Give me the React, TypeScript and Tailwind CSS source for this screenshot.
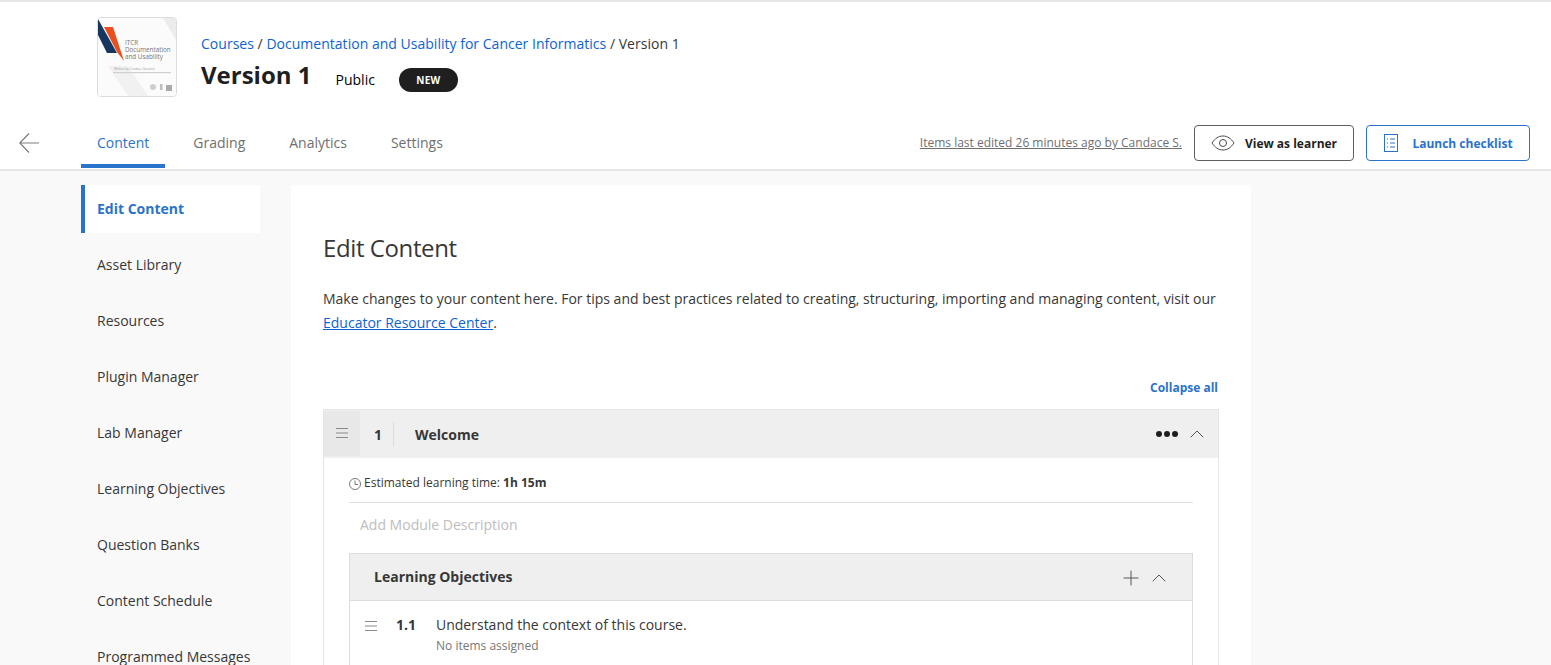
import { ChevronUp, Plus } from "lucide-react"

const font = { fontFamily: '"Open Sans", sans-serif' }

const tabs = ["Content", "Grading", "Analytics", "Settings"]

const sideItems = [
  "Edit Content",
  "Asset Library",
  "Resources",
  "Plugin Manager",
  "Lab Manager",
  "Learning Objectives",
  "Question Banks",
  "Content Schedule",
  "Programmed Messages",
]

function Thumbnail() {
  return (
    <div className="w-20 h-20 rounded border border-[#dcdcdc] overflow-hidden bg-white shrink-0">
      <svg width="78" height="78" viewBox="0 0 78 78">
        <rect width="78" height="78" fill="#fbfbfb" />
        <polygon points="65,0 78,0 78,22" fill="#ececec" />
        <polygon points="10,48 30,48 50,78 30,78" fill="#f1f1f1" />
        <polygon points="0,1 19,35 9,35 0,17" fill="#17375e" />
        <polygon points="6,9 15,9 26,43 19,34" fill="#e8501f" />
        <text x="27" y="27" fontSize="6.300" fill="#777">ITCR</text>
        <text x="27" y="34" fontSize="6.300" fill="#777">Documentation</text>
        <text x="27" y="41" fontSize="6.300" fill="#777">and Usability</text>
        <text x="16" y="52" fontSize="3" fill="#999">Written by: Candace Savonen</text>
        <rect x="15" y="54" width="58" height="1.200" fill="#d0d0d0" />
        <circle cx="55" cy="69" r="3" fill="#cfcfcf" />
        <rect x="62" y="66" width="2.500" height="6" fill="#bdbdbd" />
        <rect x="68" y="67" width="6" height="6" fill="#aaa" />
      </svg>
    </div>
  )
}

function Handle() {
  return (
    <svg width="12" height="10" viewBox="0 0 12 10" stroke="#8a8a8a" strokeWidth="1">
      <path d="M0 .5h12M0 5h12M0 9.500h12" />
    </svg>
  )
}

export default function App() {
  return (
    <div style={font} className="h-[665px] overflow-hidden bg-[#f9f9f9] text-[#1f1f1f] text-sm">
      <header className="bg-white border-t-2 border-b-2 border-[#e6e6e6] h-[171px] flex flex-col">
        <div className="flex pl-[97px] pt-[15px] h-[121px]">
          <Thumbnail />
          <div className="ml-6 pt-[17px]">
            <div className="leading-5 text-[#373737] tracking-[0.02px]">
              <span className="text-[#0b63d6]">Courses</span> /{" "}
              <span className="text-[#0b63d6]">Documentation and Usability for Cancer Informatics</span> / Version 1
            </div>
            <div className="flex items-start mt-[3px]">
              <h1 className="text-2xl leading-9 font-bold">Version 1</h1>
              <span className="ml-6 mt-[11px] leading-[24px] text-black">Public</span>
              <span className="ml-6 mt-[11px] w-[59px] h-6 rounded-full bg-[#1f1f1f] text-white text-[10px] font-bold flex items-center justify-center tracking-wide">
                NEW
              </span>
            </div>
          </div>
        </div>
        <div className="flex items-start pl-[19px] pr-[21px]">
          <svg className="mt-[10px] shrink-0" width="20" height="20" viewBox="0 0 20 20" fill="none" stroke="#7c7c7c" strokeWidth="1.200">
            <path d="M20 10H.8M10 .5.8 10l9.200 9.500" />
          </svg>
          <nav className="flex gap-3 ml-[42px]">
            {tabs.map((t, i) => (
              <div
                key={t}
                className={
                  i === 0
                    ? "h-[45px] px-4 pt-[10px] leading-5 text-[#2a73cc] border-b-4 border-[#2a73cc]"
                    : "h-[45px] px-4 pt-[10px] leading-5 text-[#6f6f6f]"
                }
              >
                {t}
              </div>
            ))}
          </nav>
          <div className="ml-auto flex items-center gap-3 pt-[2px]">
            <span className="text-xs text-[#6f6f6f] underline">Items last edited 26 minutes ago by Candace S.</span>
            <button className="w-40 h-9 rounded-sm border border-[#5f5f5f] flex items-center justify-center gap-[10px] text-xs font-bold text-[#1f1f1f]">
              <svg width="24" height="16" viewBox="0 0 24 16" fill="none" stroke="#4a4a4a" strokeWidth="1">
                <path d="M1 8c3-4.500 6.500-7 11-7s8 2.500 11 7c-3 4.500-6.500 7-11 7S4 12.500 1 8Z" />
                <circle cx="12" cy="8" r="3.500" />
              </svg>
              <span className="mt-px">View as learner</span>
            </button>
            <button className="w-[164px] h-9 rounded-sm border border-[#2a73cc] flex items-center justify-center gap-[13px] text-xs font-bold text-[#2a73cc]">
              <svg width="16" height="20" viewBox="0 0 16 20" fill="none" stroke="#2a73cc" strokeWidth="1">
                <rect x="1.500" y="1.500" width="13" height="17" />
                <path d="M4 6h1M7 6h5M4 10h1M7 10h5M4 14h1M7 14h5" />
              </svg>
              <span className="mt-px">Launch checklist</span>
            </button>
          </div>
        </div>
      </header>

      <div className="flex pl-[81px] pt-[14px]">
        <aside className="w-[179px] shrink-0 flex flex-col gap-2">
          {sideItems.map((s, i) => (
            <div
              key={s}
              className={
                i === 0
                  ? "h-12 shrink-0 flex items-center pl-3 bg-white border-l-4 border-[#2a73cc] font-bold text-[#2a73cc]"
                  : "h-12 shrink-0 flex items-center pl-4 text-[#373737] whitespace-nowrap"
              }
            >
              {s}
            </div>
          ))}
        </aside>

        <main className="ml-[31px] w-[960px] h-[600px] bg-white px-8 pt-[45px]">
          <h2 className="text-2xl leading-9 text-[#373737] tracking-[-0.4px]">Edit Content</h2>
          <p className="mt-[21px] leading-6 text-[#373737]">
            Make changes to your content here. For tips and best practices related to creating, structuring, importing and managing content, visit our{" "}
            <span className="text-[#0b63d6] underline">Educator Resource Center</span>.
          </p>
          <div className="mt-[45px] pr-px text-right text-xs leading-4 font-bold text-[#2a73cc]">Collapse all</div>

          <section className="mt-[13px] w-[896px] border-r border-l border-[#e6e6e6]">
            <div className="h-[49px] bg-[#efefef] border-t border-[#e6e6e6] flex items-center pr-[9px]">
              <div className="w-9 h-[45px] -mt-px bg-[#e8e8e8] flex items-center justify-center pb-px">
                <Handle />
              </div>
              <span className="ml-[14px] mt-[2px] font-bold text-[#373737]">1</span>
              <span className="ml-[11px] w-px h-6 bg-[#dcdcdc]" />
              <span className="ml-[21px] mt-[2px] font-bold text-[#373737]">Welcome</span>
              <span className="ml-auto flex gap-[2px]">
                <i className="w-[6px] h-[6px] rounded-full bg-[#1f1f1f]" />
                <i className="w-[6px] h-[6px] rounded-full bg-[#1f1f1f]" />
                <i className="w-[6px] h-[6px] rounded-full bg-[#1f1f1f]" />
              </span>
              <ChevronUp className="ml-[7px] text-[#555]" size={24} strokeWidth={1} />
            </div>

            <div className="px-[25px]">
              <div className="h-[45px] pt-[6px] border-b border-[#e0e0e0] flex items-center text-xs text-[#373737]">
                <svg className="mr-[3px] mt-px" width="12" height="12" viewBox="0 0 12 12" fill="none" stroke="#555" strokeWidth=".8">
                  <circle cx="6" cy="6" r="5.500" />
                  <path d="M6 2.500V6.500H9" />
                </svg>
                Estimated learning time:&nbsp;<b>1h 15m</b>
              </div>
              <div className="h-[50px] pb-[6px] pl-[11px] flex items-center text-[#bdbdbd]">Add Module Description</div>

              <div className="border-l border-r border-[#dcdcdc] h-[120px]">
                <div className="h-[48px] bg-[#efefef] border-t border-b border-[#dcdcdc] flex items-center pl-6 pr-[21px]">
                  <span className="font-bold text-[#373737]">Learning Objectives</span>
                  <Plus className="ml-auto mt-[2px] text-[#555]" size={24} strokeWidth={1} />
                  <ChevronUp className="ml-[4px] mt-[2px] text-[#555]" size={24} strokeWidth={1} />
                </div>
                <div className="flex items-start pl-[15px] pt-[14px]">
                  <span className="mt-[6px]">
                    <Handle />
                  </span>
                  <span className="ml-[19px] font-bold text-[#373737] leading-5">1.1</span>
                  <div className="ml-5">
                    <div className="leading-5 text-[#373737]">Understand the context of this course.</div>
                    <div className="text-xs leading-5 mt-px text-[#777]">No items assigned</div>
                  </div>
                </div>
              </div>
            </div>
          </section>
        </main>
      </div>
    </div>
  )
}
